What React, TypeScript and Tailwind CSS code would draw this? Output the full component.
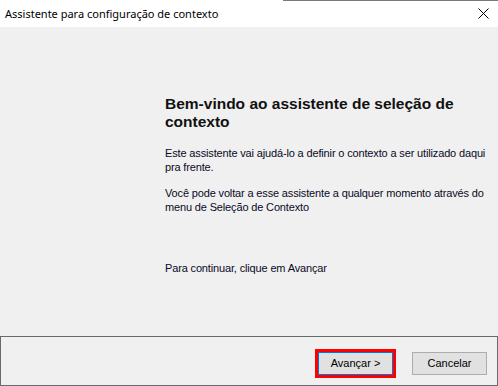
import React from "react";

export default function App() {
  const sans = { fontFamily: '"Liberation Sans", Arial, sans-serif' };
  return (
    <div className="w-[498px] h-[386px] flex flex-col bg-[#f0f0f0] overflow-hidden relative" style={sans}>
      <div className="absolute top-0 left-[283px] right-0 h-px bg-[#7a7a7a]" />
      <div className="h-[27px] shrink-0 bg-white flex items-center justify-between pl-[5px] pr-[9px]">
        <span className="text-[11px] text-black leading-none" style={{ fontFamily: '"Noto Sans", "Open Sans", sans-serif' }}>
          Assistente para configuração de contexto
        </span>
        <svg width="11" height="11" viewBox="0 0 11 11" className="block">
          <path d="M0.5 0.5 L10.5 10.5 M10.5 0.5 L0.5 10.5" stroke="#000" strokeWidth="1" fill="none" />
        </svg>
      </div>
      <div className="flex-1 pl-[165px] pt-[68px]">
        <div className="w-[328px]">
          <h1 className="text-[15.5px] leading-[18px] font-bold text-[#111]">
            Bem-vindo ao assistente de seleção de contexto
          </h1>
          <p className="mt-[15px] text-[11px] leading-[14px] tracking-[-0.15px] text-[#0a0a1e]">
            Este assistente vai ajudá-lo a definir o contexto a ser utilizado daqui pra frente.
          </p>
          <p className="mt-[12px] text-[11px] leading-[14px] tracking-[-0.15px] text-[#0a0a1e]">
            Você pode voltar a esse assistente a qualquer momento através do menu de Seleção de Contexto
          </p>
          <p className="mt-[47px] text-[11px] leading-[14px] tracking-[-0.15px] text-[#0a0a1e]">
            Para continuar, clique em Avançar
          </p>
        </div>
      </div>
      <div className="h-[50px] shrink-0 border border-[#6a6a6a] flex justify-end items-start pt-[15px] pr-[10px] gap-[19px]">
        <button className="w-[75px] h-[23px] bg-[#e1e1e1] border border-[#0078d7] text-[11px] text-black outline-3 outline-[#ff0000] flex items-center justify-center">
          Avançar &gt;
        </button>
        <button className="w-[75px] h-[23px] bg-[#e1e1e1] border border-[#adadad] text-[11px] text-black flex items-center justify-center">
          Cancelar
        </button>
      </div>
    </div>
  );
}
